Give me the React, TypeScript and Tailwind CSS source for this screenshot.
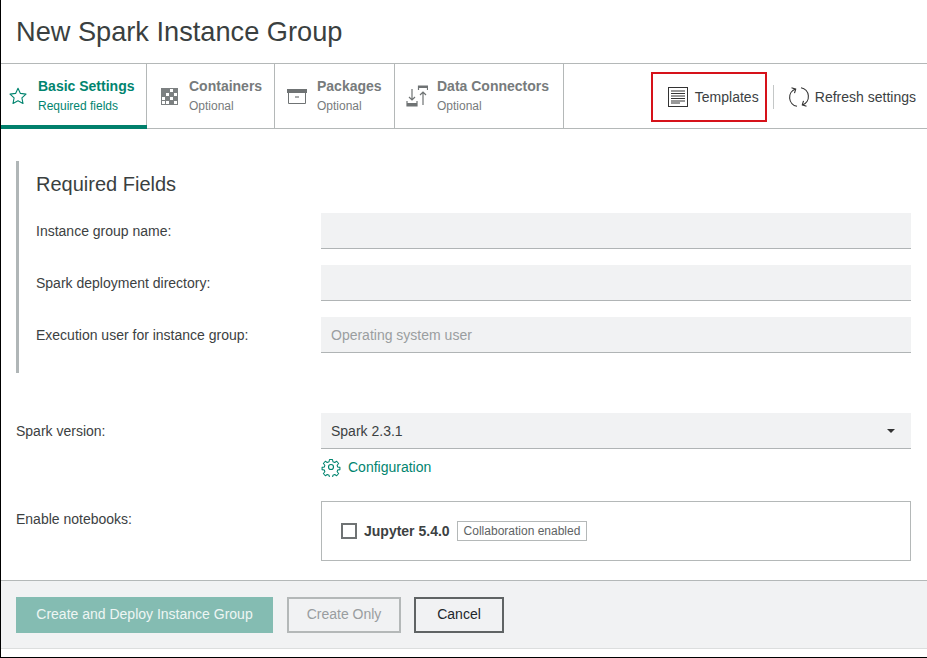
import React from "react";

function Tab({ icon, title, sub, active, w }: { icon: React.ReactNode; title: string; sub: string; active?: boolean; w: string }) {
  return (
    <div className={`${w} h-full flex items-center border-r border-[#b4b8b8] relative`}>
      {icon}
      <div className="flex flex-col pb-[2px]">
        <span className={`text-[14px] leading-[20px] font-bold ${active ? "text-[#01846f]" : "text-[#777b7c]"}`}>{title}</span>
        <span className={`text-[12px] leading-[18px] mt-[1px] ${active ? "text-[#01846f]" : "text-[#777b7c]"}`}>{sub}</span>
      </div>
      {active && <div className="absolute left-0 right-[-1px] bottom-[-1px] h-[4px] bg-[#01806c]" />}
    </div>
  );
}

function Field({ label, placeholder }: { label: string; placeholder?: string }) {
  return (
    <div className="flex items-center h-[36px] mb-[16px]">
      <label className="w-[285px] text-[14px] text-[#3c4142]">{label}</label>
      <div className="w-[590px] h-[36px] bg-[#f1f2f3] border-b border-[#b0b4b5] flex items-center px-[10px] pt-[1px] text-[14px] text-[#9a9ea0]">{placeholder}</div>
    </div>
  );
}

const containerCells = [
  [1, 1, 0, 1],
  [1, 0, 1, 0],
  [0, 1, 0, 1],
  [0, 0, 1, 0],
];

export default function App() {
  return (
    <div className="w-[927px] h-[658px] bg-white border-l border-b border-black flex flex-col overflow-hidden font-['Liberation_Sans',Arial,sans-serif] text-[#3c4142]">
      <div className="h-[63px] flex items-center pl-[15px] text-[27.2px] text-[#3a3f40] shrink-0 pt-[1px]">New Spark Instance Group</div>
      <div className="h-[66px] border-y border-[#b4b8b8] flex items-center shrink-0">
        <Tab
          active
          w="w-[146px]"
          title="Basic Settings"
          sub="Required fields"
          icon={
            <svg width="18" height="18" viewBox="0 0 18 18" className="ml-[8px] mr-[11px]" fill="none" stroke="#01846f" strokeWidth="1.1" strokeLinejoin="round">
              <path d="M9 1.2l2.4 5.2 5.6.7-4.1 3.8 1.1 5.6L9 13.7l-5 2.8 1.1-5.6L1 7.1l5.6-.7z" />
            </svg>
          }
        />
        <Tab
          w="w-[128px]"
          title="Containers"
          sub="Optional"
          icon={
            <svg width="17" height="17" viewBox="0 0 17 17" className="ml-[14px] mr-[11px]">
              <rect x="0" y="0" width="17" height="17" fill="#7c8081" />
              {containerCells.flatMap((row, r) =>
                row.map((c, i) =>
                  c === 0 ? <rect key={`${r}-${i}`} x={1 + i * 4} y={1 + r * 4} width="3" height="3" fill="#ffffff" /> : null
                )
              )}
            </svg>
          }
        />
        <Tab
          w="w-[120px]"
          title="Packages"
          sub="Optional"
          icon={
            <svg width="20" height="15" viewBox="0 0 20 15" className="ml-[12px] mr-[10px]" fill="none" stroke="#6f7374">
              <rect x="0" y="0" width="20" height="4" fill="#6f7374" stroke="none" />
              <path d="M1.5 4v10.5h17V4" />
              <path d="M8 8h4" strokeWidth="1.2" />
            </svg>
          }
        />
        <Tab
          w="w-[169px]"
          title="Data Connectors"
          sub="Optional"
          icon={
            <svg width="22" height="22" viewBox="0 0 22 22" className="ml-[11px] mr-[9px]" fill="none" stroke="#6f7374" strokeWidth="1.2">
              <path d="M6 4v11M3 12l3 3 3-3" />
              <path d="M1 16v5h10v-5" />
              <rect x="1" y="18" width="10" height="3" fill="#6f7374" stroke="none" />
              <path d="M17 20V7M14 10l3-3 3 3" />
              <path d="M12.5 5V1h9v4" />
              <rect x="12.5" y="1" width="9" height="2" fill="#6f7374" stroke="none" />
            </svg>
          }
        />
        <div className="flex-1" />
        <div className="w-[116px] h-[50px] mt-[1px] border-2 border-[#d6121a] flex items-center pl-[15px] mr-[6px] text-[14px] text-[#3c4142]">
          <svg width="20" height="20" viewBox="0 0 20 20" className="mr-[7px]" fill="none" stroke="#333">
            <rect x="0.5" y="0.5" width="19" height="19" />
            <path d="M3 4h14M3 6.5h14M3 9h14M3 11.5h14M3 14h14M3 16h9" />
          </svg>
          <span className="pt-[1px]">Templates</span>
        </div>
        <div className="w-px h-[24px] mt-[1px] bg-[#c4c7c7] mr-[14px]" />
        <svg width="22" height="22" viewBox="0 0 22 22" className="mr-[5px] mt-[1px]" fill="none" stroke="#333" strokeWidth="1.1">
          <path d="M7.5 3A9 9 0 0 0 9 20.3" />
          <path d="M3.5 1.8l4.2 1.3-1.2 4" />
          <path d="M14.5 19A9 9 0 0 0 13 1.7" />
          <path d="M18.5 20.2l-4.2-1.3 1.2-4" />
        </svg>
        <span className="text-[14px] text-[#3c4142] mr-[11px] pt-[2px]">Refresh settings</span>
      </div>

      <div className="flex-1 pl-[15px] pt-[32px]">
        <div className="border-l-[3px] border-[#b0b6b7] pl-[17px] h-[212px] pt-[11px]">
          <h2 className="text-[20px] leading-[24px] text-[#3a3f40] mb-[17px]">Required Fields</h2>
          <Field label="Instance group name:" />
          <Field label="Spark deployment directory:" />
          <Field label="Execution user for instance group:" placeholder="Operating system user" />
        </div>

        <div className="flex items-center h-[36px] mt-[40px]">
          <label className="w-[305px] text-[14px]">Spark version:</label>
          <div className="w-[590px] h-[36px] bg-[#f1f2f3] border-b border-[#b0b4b5] flex items-center justify-between px-[10px] pr-[16px] pt-[1px] text-[14px]">
            Spark 2.3.1
            <span className="w-0 h-0 border-x-[4px] border-x-transparent border-t-[4px] border-t-[#333]" />
          </div>
        </div>
        <div className="flex items-center ml-[305px] mt-[7px] h-[22px] text-[14px] text-[#01846f]">
          <svg width="20" height="20" viewBox="0 0 24 24" className="mr-[7px]" fill="none" stroke="#01846f" strokeWidth="1.4" strokeLinejoin="round">
            <path d="M10 2h4l.6 3 2.4 1 2.6-1.7 2.6 3-2 2.4.7 2.3 3 .5v3l-3 .5-.7 2.3 2 2.4-2.6 3-2.6-1.7-2.4 1-.6 3h-4l-.6-3-2.4-1-2.6 1.7-2.6-3 2-2.4-.7-2.3-3-.5v-3l3-.5.7-2.3-2-2.4 2.6-3L7 6l2.4-1z" transform="translate(1.2 1.2) scale(0.9)" />
            <circle cx="12" cy="12" r="3" />
          </svg>
          Configuration
        </div>
        <div className="flex items-start mt-[23px]">
          <label className="w-[305px] text-[14px] pt-[8px]">Enable notebooks:</label>
          <div className="w-[590px] h-[60px] border border-[#b4b8b8] flex items-center pl-[19px]">
            <span className="w-[16px] h-[16px] border-2 border-[#6f7374] mr-[7px] bg-white" />
            <span className="text-[14px] font-bold mr-[7px]">Jupyter 5.4.0</span>
            <span className="h-[20px] border border-[#b4b8b8] px-[6px] flex items-center text-[12px] text-[#5e6364]">Collaboration enabled</span>
          </div>
        </div>
      </div>

      <div className="h-[69px] bg-[#f1f2f3] border-t border-[#b4b8b8] border-b border-b-[#dcdede] flex items-center pl-[15px] shrink-0 text-[14px]">
        <div className="w-[257px] h-[36px] bg-[#84bcb2] text-[#eef6f4] flex items-center justify-center">Create and Deploy Instance Group</div>
        <div className="w-[114px] h-[36px] ml-[14px] border-2 border-[#b4b8b8] text-[#999d9f] flex items-center justify-center">Create Only</div>
        <div className="w-[90px] h-[36px] ml-[13px] border-2 border-[#5f6364] text-[#22272b] flex items-center justify-center">Cancel</div>
      </div>
      <div className="h-[8px] shrink-0" />
    </div>
  );
}
